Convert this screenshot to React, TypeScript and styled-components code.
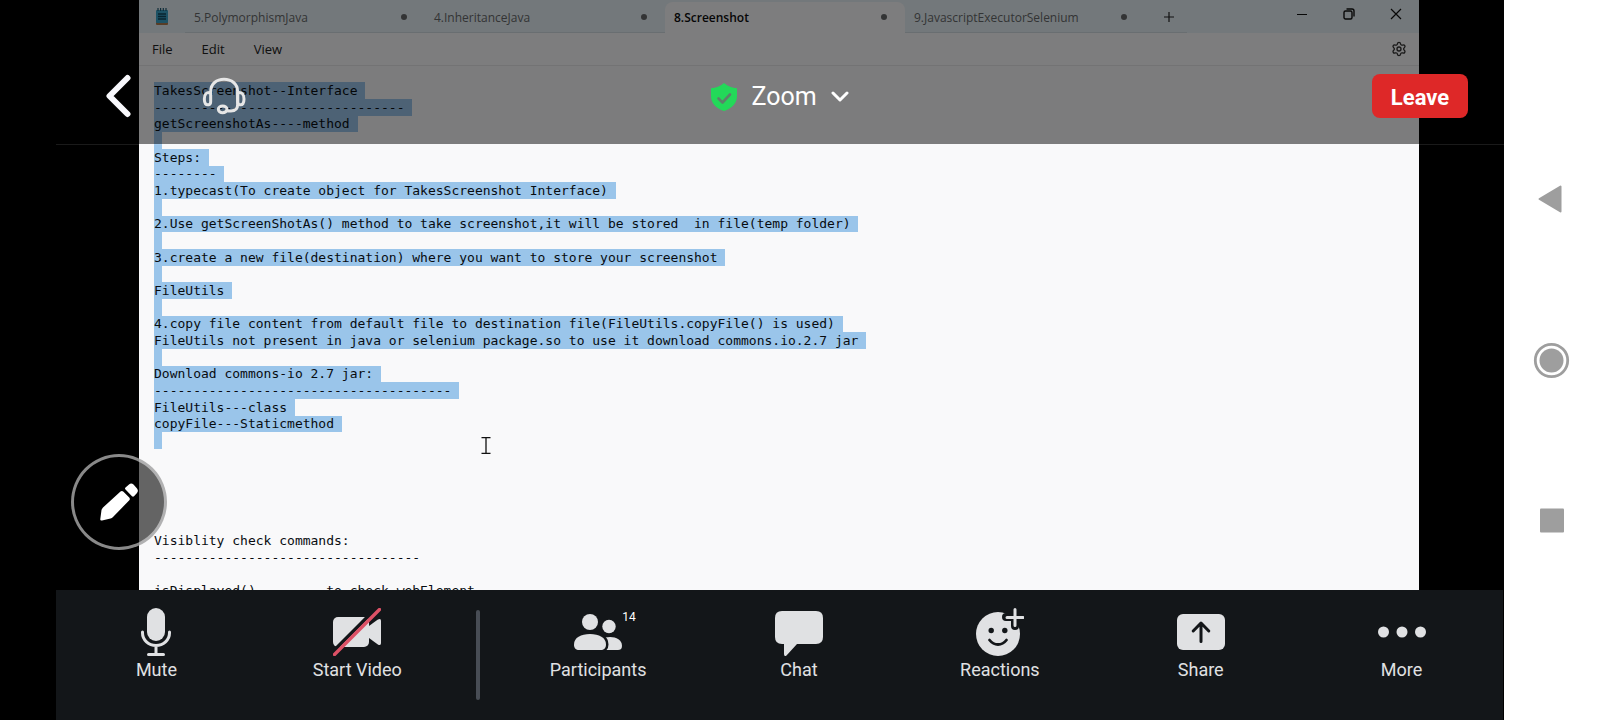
import React from "react";
import styled, { createGlobalStyle } from "styled-components";
import { Settings } from "lucide-react";

const GlobalStyle = createGlobalStyle`
  *, *::before, *::after { box-sizing: border-box; }
  body { margin: 0; background: #000; }
  button { border: 0; padding: 0; margin: 0; background: none; font: inherit; color: inherit; cursor: pointer; }
  svg { display: block; flex: none; }
`;

const uiFont = `"Open Sans", "Noto Sans", sans-serif`;
const appFont = `Roboto, "Liberation Sans", sans-serif`;

/* ---------- Frame ---------- */

const Device = styled.div`
  display: flex;
  min-height: 100vh;
  padding-left: 56px;
  background: #000;
`;

const Meeting = styled.main`
  flex: 1;
  min-width: 0;
  display: grid;
  grid-template-columns: minmax(0, 1fr);
  grid-template-rows: auto 1fr auto;
  font-family: ${appFont};
`;

/* ---------- Shared notepad window ---------- */

const SharedScreen = styled.section`
  grid-area: 1 / 1 / 3 / 2;
  position: relative;
  margin: 0 85px 0 83px;
  min-height: 0;
  height: calc(100vh - 130px);
  overflow: hidden;
  background: #f9f9fa;
  color: #111;
`;

const TitleBar = styled.div`
  display: flex;
  height: 33px;
  background: #e7f1f6;
  font-family: ${uiFont};
  font-size: 12px;
`;

const AppIcon = styled.div`
  width: 46px;
  padding: 8px 0 0 16px;
`;

const TabList = styled.div`
  flex: 0 1 960px;
  display: flex;
  min-width: 0;
`;

const Tab = styled.button<{ $active?: boolean }>`
  flex: 1;
  min-width: 0;
  display: flex;
  align-items: center;
  justify-content: space-between;
  margin-top: ${(p) => (p.$active ? "2px" : "0")};
  padding: ${(p) => (p.$active ? "0" : "2px")} 18px 0 9px;
  border-radius: ${(p) => (p.$active ? "8px 8px 0 0" : "0")};
  background: ${(p) => (p.$active ? "#fbfafc" : "transparent")};
  color: ${(p) => (p.$active ? "#0c0c0c" : "#66696b")};
  font-weight: ${(p) => (p.$active ? 600 : 400)};
  border-bottom: 1px solid ${(p) => (p.$active ? "#fbfafc" : "#d3dce2")};
  white-space: nowrap;
`;

const UnsavedDot = styled.span`
  width: 6px;
  height: 6px;
  border-radius: 50%;
  background: #66696b;
`;

const NewTab = styled.button`
  width: 42px;
  padding: 2px 0 0 18px;
  border-bottom: 1px solid #d3dce2;
`;

const WindowButtons = styled.div`
  margin-left: auto;
  display: flex;
  align-items: center;
  padding-bottom: 5px;
`;

const WindowButton = styled.button`
  width: 47px;
  height: 28px;
  display: grid;
  place-items: center;
`;

const MenuBar = styled.nav`
  display: flex;
  align-items: center;
  gap: 29px;
  height: 33px;
  padding: 0 12px 0 13px;
  border-bottom: 1px solid #e6e6e8;
  background: #fbfafc;
  font-family: ${uiFont};
  font-size: 13px;
  color: #222;
`;

const GearButton = styled.button`
  margin-left: auto;
`;

const Document = styled.div`
  padding: 16px 15px 0;
  font-family: "DejaVu Sans Mono", "Liberation Mono", monospace;
  font-size: 13px;
  color: #080c10;
`;

const Line = styled.div`
  display: flex;
  height: 17px;
  line-height: 17px;
  white-space: pre;
  &:nth-child(3n) {
    height: 16px;
    line-height: 16px;
  }
`;

const Selected = styled.span`
  background: #9ac5ea;
`;

const TextCursor = styled.svg`
  position: absolute;
  left: 342px;
  top: 437px;
`;

/* ---------- Meeting header ---------- */

const Header = styled.header`
  grid-area: 1 / 1;
  z-index: 1;
  display: grid;
  grid-template-columns: 1fr auto 1fr;
  align-items: center;
  height: 145px;
  padding: 48px 36px 0;
  background: rgba(0, 0, 0, 0.5);
  background-clip: padding-box;
  border-bottom: 1px solid rgba(255, 255, 255, 0.1);
  color: #fff;
`;

const HeaderLeft = styled.div`
  display: flex;
  align-items: center;
  gap: 71px;
  padding-left: 13px;
`;

const MeetingTitle = styled.button`
  display: flex;
  align-items: center;
  gap: 14px;
  padding-top: 2px;
  font-size: 25px;
  line-height: 32px;
`;

const LeaveButton = styled.button`
  justify-self: end;
  width: 96px;
  height: 44px;
  padding-top: 2px;
  border-radius: 8px;
  background: #de2828;
  color: #fff;
  font-size: 22px;
  font-weight: 700;
`;

/* ---------- Annotate button ---------- */

const AnnotateButton = styled.button`
  grid-area: 2 / 1;
  z-index: 1;
  align-self: end;
  margin: 0 0 40px 15px;
  width: 96px;
  height: 96px;
  display: grid;
  place-items: center;
  border: 3px solid rgba(228, 228, 228, 0.6);
  border-radius: 50%;
  background: rgba(0, 0, 0, 0.6);
`;

/* ---------- Toolbar ---------- */

const Toolbar = styled.footer`
  grid-area: 3 / 1;
  z-index: 1;
  display: flex;
  height: 130px;
  margin-right: 1px;
  padding-right: 1px;
  background: #131619;
  color: #e0e1e3;
`;

const ToolButton = styled.button`
  flex: 1;
  min-width: 0;
  display: flex;
  flex-direction: column;
  align-items: center;
  padding-top: 18px;
  font-size: 18px;
  line-height: 28px;
`;

const IconSlot = styled.span`
  position: relative;
  display: block;
`;

const Count = styled.span`
  position: absolute;
  left: 100%;
  top: 0;
  font-size: 12px;
  line-height: 18px;
  color: #fff;
`;

const Divider = styled.span`
  width: 4px;
  height: 90px;
  margin: 20px 18px 0;
  border-radius: 2px;
  background: #484d55;
`;

/* ---------- System navigation ---------- */

const SystemNav = styled.nav`
  width: 96px;
  display: flex;
  flex-direction: column;
  align-items: center;
  justify-content: center;
  gap: 121px;
  background: #fff;
`;

const SystemButton = styled.button`
  width: 40px;
  height: 40px;
`;

/* ---------- Data ---------- */

const tabs = [
  { name: "5.PolymorphismJava" },
  { name: "4.InheritanceJava" },
  { name: "8.Screenshot", active: true },
  { name: "9.JavascriptExecutorSelenium" },
];

const selectedLines = [
  "TakesScreenshot--Interface",
  "-".repeat(32),
  "getScreenshotAs----method",
  "",
  "Steps:",
  "--------",
  "1.typecast(To create object for TakesScreenshot Interface)",
  "",
  "2.Use getScreenShotAs() method to take screenshot,it will be stored  in file(temp folder)",
  "",
  "3.create a new file(destination) where you want to store your screenshot",
  "",
  "FileUtils",
  "",
  "4.copy file content from default file to destination file(FileUtils.copyFile() is used)",
  "FileUtils not present in java or selenium package.so to use it download commons.io.2.7 jar",
  "",
  "Download commons-io 2.7 jar:",
  "-".repeat(38),
  "FileUtils---class",
  "copyFile---Staticmethod",
  "",
];

const plainLines = [
  "",
  "",
  "",
  "",
  "",
  "Visiblity check commands:",
  "-".repeat(34),
  "",
  "isDisplayed()         to check webElement",
];

/* ---------- Icons ---------- */

const fg = "#e0e1e3";
const bar = "#131619";

const NotepadIcon = () => (
  <svg width="14" height="18" viewBox="0 0 14 18">
    <rect x="1" y="14" width="12" height="3" rx="1" fill="#b07a4c" />
    <rect x="1" y="2" width="12" height="13" rx="1" fill="#3aa5cb" />
    <path d="M3 0v3M5.600 0v3M8.300 0v3M11 0v3" stroke="#1e5a74" strokeWidth="1.200" />
    <path d="M3 6h8M3 8.500h8M3 11h8" stroke="#12485f" strokeWidth="1.300" />
  </svg>
);

const MicIcon = () => (
  <svg width="48" height="48" viewBox="0 0 48 48">
    <rect x="15" y="0" width="18" height="33" rx="9" fill={fg} />
    <path d="M10.500 24v1a13.500 12.500 0 0 0 27 0v-1M24 38v8M16.500 46.500h15" fill="none" stroke={fg} strokeWidth="3" strokeLinecap="round" />
  </svg>
);

const VideoOffIcon = () => (
  <svg width="48" height="48" viewBox="0 0 48 48">
    <rect x="0" y="9" width="36" height="30" rx="5" fill={fg} />
    <path d="M36 18l8.500-6.200Q48 9.500 48 13v22q0 3.500-3.500 1.200L36 30z" fill={fg} />
    <path d="M0 43.500L43.500 0" stroke={bar} strokeWidth="3.600" />
    <path d="M1.500 46.500l45-45" stroke="#dd5166" strokeWidth="3.400" strokeLinecap="round" />
  </svg>
);

const PeopleIcon = () => (
  <svg width="48" height="48" viewBox="0 0 48 48">
    <g fill={fg}>
      <circle cx="35" cy="18.500" r="6.700" />
      <path d="M31 29.500c8-1.800 17 .5 17 8.500 0 3-2 4-4 4H31z" />
      <path d="M16 26c9 0 16 3.500 16 10.500 0 4-2.500 5.500-5 5.500H5c-3 0-5-1.500-5-5.500C0 29.500 7 26 16 26z" stroke={bar} strokeWidth="5" paintOrder="stroke" />
      <circle cx="16" cy="14" r="8" />
    </g>
  </svg>
);

const ChatIcon = () => (
  <svg width="48" height="48" viewBox="0 0 48 48">
    <path d="M7 3h34q7 0 7 7v19q0 7-7 7H22L11.500 47.500Q9 49 9 46V36H7q-7 0-7-7V10q0-7 7-7z" fill={fg} />
  </svg>
);

const ReactionIcon = () => (
  <svg width="48" height="48" viewBox="0 0 48 48">
    <circle cx="22" cy="26" r="22" fill={fg} />
    <path d="M39 1v17M30 9h17" stroke={bar} strokeWidth="8" strokeLinecap="round" />
    <path d="M39 1.500v16M31 9.500h16" stroke={fg} strokeWidth="3" strokeLinecap="round" />
    <ellipse cx="15.200" cy="22.500" rx="2.700" ry="2.800" fill={bar} />
    <ellipse cx="28.800" cy="22.500" rx="2.700" ry="2.800" fill={bar} />
    <path d="M13.500 32q3.500 4.500 8.500 4.500t8.500-4.500" fill="none" stroke={bar} strokeWidth="2.800" strokeLinecap="round" />
  </svg>
);

const ShareIcon = () => (
  <svg width="48" height="48" viewBox="0 0 48 48">
    <rect x="0" y="6" width="48" height="36" rx="6" fill={fg} />
    <path d="M24 33.500V15.500M16.200 23L24 15l7.800 8" fill="none" stroke={bar} strokeWidth="3" strokeLinecap="round" strokeLinejoin="round" />
  </svg>
);

const MoreIcon = () => (
  <svg width="48" height="48" viewBox="0 0 48 48" fill={fg}>
    <circle cx="5.500" cy="24" r="5.500" />
    <circle cx="24" cy="24" r="5.500" />
    <circle cx="42.500" cy="24" r="5.500" />
  </svg>
);

const tools = [
  { label: "Mute", Icon: MicIcon },
  { label: "Start Video", Icon: VideoOffIcon, dividerAfter: true },
  { label: "Participants", Icon: PeopleIcon, count: 14 },
  { label: "Chat", Icon: ChatIcon },
  { label: "Reactions", Icon: ReactionIcon },
  { label: "Share", Icon: ShareIcon },
  { label: "More", Icon: MoreIcon },
];

/* ---------- Page ---------- */

export default function App() {
  return (
    <>
      <GlobalStyle />
      <Device>
        <Meeting>
          <SharedScreen aria-label="Shared screen">
            <TitleBar>
              <AppIcon>
                <NotepadIcon />
              </AppIcon>
              <TabList role="tablist">
                {tabs.map((t) => (
                  <Tab key={t.name} role="tab" aria-selected={!!t.active} $active={t.active}>
                    {t.name}
                    <UnsavedDot />
                  </Tab>
                ))}
              </TabList>
              <NewTab aria-label="New tab">
                <svg width="12" height="12" viewBox="0 0 12 12" stroke="#222" strokeWidth="1.200">
                  <path d="M6 1v10M1 6h10" />
                </svg>
              </NewTab>
              <WindowButtons>
                <WindowButton aria-label="Minimize">
                  <svg width="12" height="12" viewBox="0 0 12 12" stroke="#111">
                    <path d="M1 6.500h10" />
                  </svg>
                </WindowButton>
                <WindowButton aria-label="Restore">
                  <svg width="12" height="12" viewBox="0 0 12 12" fill="none" stroke="#111" strokeWidth="1.400">
                    <rect x="1" y="3" width="8" height="8" rx="1.500" />
                    <path d="M3.500 1H9q2 0 2 2v5.500" />
                  </svg>
                </WindowButton>
                <WindowButton aria-label="Close">
                  <svg width="12" height="12" viewBox="0 0 12 12" stroke="#111" strokeWidth="1.200">
                    <path d="M1 1l10 10M11 1L1 11" />
                  </svg>
                </WindowButton>
              </WindowButtons>
            </TitleBar>
            <MenuBar>
              <button>File</button>
              <button>Edit</button>
              <button>View</button>
              <GearButton aria-label="Settings">
                <Settings size={16} strokeWidth={2} color="#333" />
              </GearButton>
            </MenuBar>
            <Document>
              {selectedLines.map((text, i) => (
                <Line key={i}>
                  <Selected>{text + " "}</Selected>
                </Line>
              ))}
              {plainLines.map((text, i) => (
                <Line key={selectedLines.length + i}>{text}</Line>
              ))}
            </Document>
            <TextCursor width="10" height="17" viewBox="0 0 10 17" fill="none" stroke="#111" strokeWidth="1.300">
              <path d="M.5.700h9M.5 16.300h9M5 .7v15.600" />
            </TextCursor>
          </SharedScreen>

          <Header>
            <HeaderLeft>
              <button aria-label="Back">
                <svg width="26" height="44" viewBox="0 0 26 44" fill="none" stroke="#f8f8fc" strokeWidth="6" strokeLinecap="round" strokeLinejoin="round">
                  <path d="M22.500 4L4.500 22l18 18" />
                </svg>
              </button>
              <button aria-label="Support">
                <svg width="44" height="38" viewBox="0 0 132 114" fill="none" stroke="#e6e6e6" strokeWidth="9" strokeLinecap="round" strokeLinejoin="round">
                  <path d="M26 44C26 20 44 7 66 7s41 13 41 37v38q0 20-20 20h-9" />
                  <path d="M26 47q-19-3-19 19 0 20 13 17 6-1 6-9z" />
                  <path d="M107 47q19-3 19 19 0 20-13 17-6-1-6-9z" />
                  <ellipse cx="62" cy="97" rx="13" ry="10" />
                </svg>
              </button>
            </HeaderLeft>
            <MeetingTitle>
              <svg width="26" height="28" viewBox="0 0 26 28">
                <path d="M13 0c4 3.500 8 5 13 5.200V13c0 7-5 12.500-13 15C5 25.500 0 20 0 13V5.200C5 5 9 3.500 13 0z" fill="#23d959" />
                <path d="M7.500 15.500l4 4L19 11.500" fill="none" stroke="#5d806a" strokeWidth="2.600" strokeLinecap="round" strokeLinejoin="round" />
              </svg>
              Zoom
              <svg width="18" height="12" viewBox="0 0 18 12" fill="none" stroke="#fff" strokeWidth="3" strokeLinecap="round" strokeLinejoin="round">
                <path d="M2 2l7 7 7-7" />
              </svg>
            </MeetingTitle>
            <LeaveButton>Leave</LeaveButton>
          </Header>

          <AnnotateButton aria-label="Annotate">
            <svg width="38" height="38" viewBox="0 0 38 38" fill="#fff">
              <path d="M20.500 8.500q1.500-1 3 .3l5.500 5.500q1.500 1.500.3 3L13 34q-1 1-2.500 1.500L2 37.500q-2 .4-1.700-1.500L1.500 27Q2 25.500 3 24.500z" />
              <path d="M25.500 4.500L29 1.500q2.200-2 4.500 0L37 5.500q1.800 2.300 0 4.500l-3 3.300q-1 .8-2 0l-6.500-6.800q-1-1 0-2z" />
            </svg>
          </AnnotateButton>

          <Toolbar>
            {tools.map(({ label, Icon, count, dividerAfter }) => (
              <React.Fragment key={label}>
                <ToolButton>
                  <IconSlot>
                    <Icon />
                    {count && <Count>{count}</Count>}
                  </IconSlot>
                  {label}
                </ToolButton>
                {dividerAfter && <Divider />}
              </React.Fragment>
            ))}
          </Toolbar>
        </Meeting>

        <SystemNav aria-label="System navigation">
          <SystemButton aria-label="System back">
            <svg width="40" height="40" viewBox="0 0 40 40" fill="#9e9e9e" stroke="#9e9e9e" strokeWidth="2" strokeLinejoin="round">
              <path d="M28.500 7.500v25L7.500 20z" />
            </svg>
          </SystemButton>
          <SystemButton aria-label="System home">
            <svg width="40" height="40" viewBox="0 0 40 40">
              <circle cx="19.500" cy="20.500" r="16.200" fill="none" stroke="#9e9e9e" strokeWidth="2.800" />
              <circle cx="19.500" cy="20.500" r="12" fill="#9e9e9e" />
            </svg>
          </SystemButton>
          <SystemButton aria-label="Recent apps">
            <svg width="40" height="40" viewBox="0 0 40 40">
              <rect x="8" y="7.500" width="24" height="24" rx="1" fill="#9e9e9e" />
            </svg>
          </SystemButton>
        </SystemNav>
      </Device>
    </>
  );
}
